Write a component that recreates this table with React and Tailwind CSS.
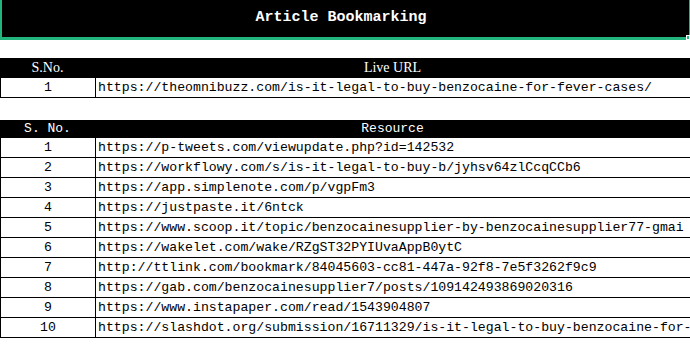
const LIVE = 'https://theomnibuzz.com/is-it-legal-to-buy-benzocaine-for-fever-cases/';

const RESOURCES = [
  'https://p-tweets.com/viewupdate.php?id=142532',
  'https://workflowy.com/s/is-it-legal-to-buy-b/jyhsv64zlCcqCCb6',
  'https://app.simplenote.com/p/vgpFm3',
  'https://justpaste.it/6ntck',
  'https://www.scoop.it/topic/benzocainesupplier-by-benzocainesupplier77-gmai',
  'https://wakelet.com/wake/RZgST32PYIUvaAppB0ytC',
  'http://ttlink.com/bookmark/84045603-cc81-447a-92f8-7e5f3262f9c9',
  'https://gab.com/benzocainesupplier7/posts/109142493869020316',
  'https://www.instapaper.com/read/1543904807',
  'https://slashdot.org/submission/16711329/is-it-legal-to-buy-benzocaine-for-',
];

const mono = "font-['Liberation_Mono','Noto_Sans_CJK_SC',monospace]";

function Row({ n, url }) {
  return (
    <div className={`grid grid-cols-[95px_1fr] h-[20px] border-b border-black border-l ${mono} text-[13.2px] text-black leading-[19px]`}>
      <div className="border-r border-black text-center">{n}</div>
      <div className="pl-[2px] whitespace-nowrap overflow-hidden">{url}</div>
    </div>
  );
}

export default function App() {
  return (
    <div className="w-[690px] h-[344px] bg-white overflow-hidden flex flex-col">
      {/* title cell, selected */}
      <div className="relative">
        <div className={`h-[37px] bg-black border-l-2 border-r border-[#21b47c] pr-[9px] flex items-center justify-center text-white font-bold text-[15px] ${mono}`}>
          Article Bookmarking
        </div>
        <div className="h-[3px] bg-[#21b47c]" />
        <div className="absolute right-0 top-[35px] w-[4px] h-[5px] bg-[#21b47c] border border-white" />
      </div>

      {/* live url */}
      <div className="mt-[18px]">
        <div className="grid grid-cols-[95px_1fr] h-[20px] bg-black text-white text-[14px] leading-[20px] font-['Liberation_Serif',serif]">
          <div className="text-center">S.No.</div>
          <div className="text-center">Live URL</div>
        </div>
        <Row n={1} url={LIVE} />
      </div>

      {/* resources */}
      <div className="mt-[22px]">
        <div className={`grid grid-cols-[95px_1fr] h-[18px] bg-black text-white text-[13px] leading-[18px] ${mono}`}>
          <div className="text-center">S. No.</div>
          <div className="text-center">Resource</div>
        </div>
        {RESOURCES.map((u, i) => (
          <Row key={i} n={i + 1} url={u} />
        ))}
      </div>
    </div>
  );
}
